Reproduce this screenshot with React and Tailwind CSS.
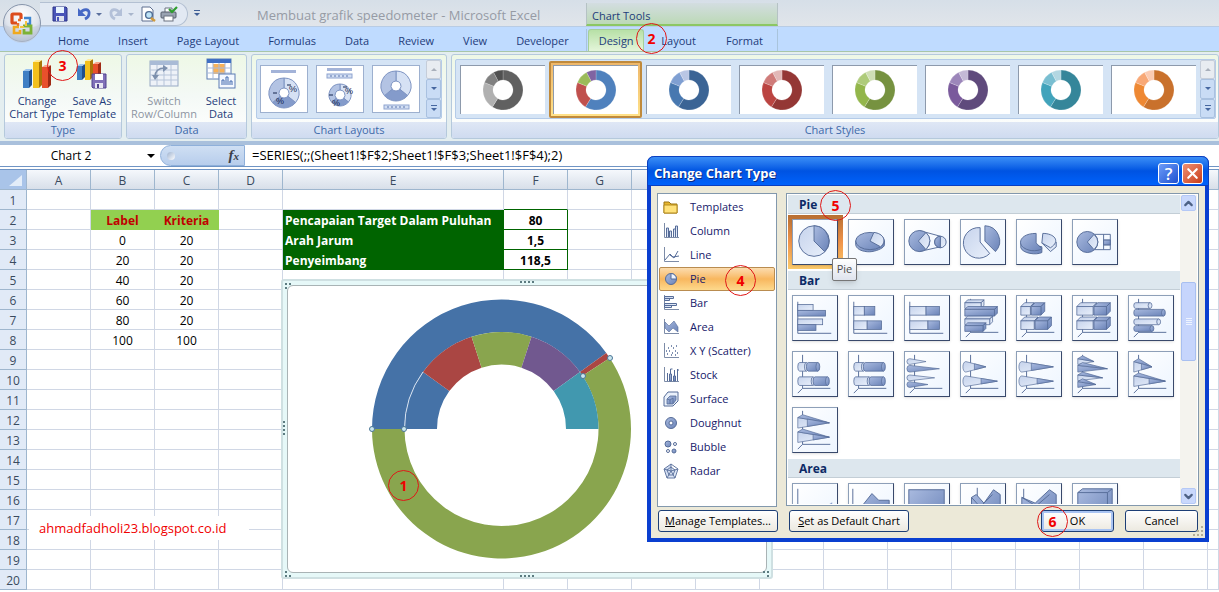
import { ChevronDown, ChevronUp, X } from "lucide-react";

const INK = "#566c98";
const LIGHT = "url(#pale)";
const DARK = "url(#steel)";

const point = (cx, cy, r, deg) => {
  const a = ((deg - 90) * Math.PI) / 180;
  return `${(cx + r * Math.cos(a)).toFixed(2)} ${(cy + r * Math.sin(a)).toFixed(2)}`;
};

// Ring slice between two angles, clockwise from 12 o'clock
function slice(cx, cy, outer, inner, from, to) {
  const large = to - from > 180 ? 1 : 0;
  return `M${point(cx, cy, outer, from)}A${outer} ${outer} 0 ${large} 1 ${point(cx, cy, outer, to)}L${point(cx, cy, inner, to)}A${inner} ${inner} 0 ${large} 0 ${point(cx, cy, inner, from)}Z`;
}

// Gradients shared by every chart icon
function SharedGradients() {
  return (
    <svg className="absolute size-0" aria-hidden="true">
      <defs>
        <linearGradient id="pale" x1="0" y1="0" x2="1" y2="1">
          <stop offset="0" stopColor="#c6d3ec" />
          <stop offset="1" stopColor="#e9f0fb" />
        </linearGradient>
        <linearGradient id="steel" x1="0" y1="0" x2="1" y2="1">
          <stop offset="0" stopColor="#a9badf" />
          <stop offset="1" stopColor="#6a83b8" />
        </linearGradient>
      </defs>
    </svg>
  );
}

/* ---------- ribbon drawings ---------- */

function OfficeLogo() {
  return (
    <svg viewBox="0 0 40 40" className="size-10">
      <defs>
        <radialGradient id="orb" cx="50%" cy="30%" r="75%">
          <stop offset="0" stopColor="#ffffff" />
          <stop offset="0.6" stopColor="#dfe4ec" />
          <stop offset="1" stopColor="#9fb0c8" />
        </radialGradient>
      </defs>
      <circle cx="20" cy="20" r="18.5" fill="url(#orb)" stroke="#8795ab" />
      <path d="M2 22a18 18 0 0 0 36 0q-18 7-36 0" fill="#c3ccda" opacity="0.5" />
      <g fill="none">
        <path d="M15 20h-4q-1 0-1-1v-7q0-1 1-1h7q1 0 1 1v4" stroke="#dc4c1c" strokeWidth="3.2" />
        <path d="M22 15h6v6h-4" stroke="#3f86cf" strokeWidth="2.4" />
        <path d="M16 20v3M19 17h-3" stroke="#e8702c" strokeWidth="2.4" />
        <path d="M17 24h-5v6h6v-3" stroke="#f0a91e" strokeWidth="2.6" />
        <path d="M21 23h8v7h-7v-4" stroke="#7cb236" strokeWidth="2.8" />
        <path d="M24 18v5M18 24h4" stroke="#f4c544" strokeWidth="2" />
      </g>
    </svg>
  );
}

function Floppy({ color = "#4a55b8" }) {
  return (
    <svg viewBox="0 0 16 16" className="size-4">
      <path d="M1 1h13l1 1v13H1z" fill={color} stroke="#2c3488" />
      <rect x="4" y="1" width="8" height="6" fill="#e8f4ff" />
      <rect x="4" y="10" width="8" height="5" fill="#dfe3ee" />
      <rect x="5" y="11" width="2" height="4" fill={color} />
    </svg>
  );
}

function UndoArrow({ color, flip }) {
  return (
    <svg viewBox="0 0 16 16" className={flip ? "size-4 -scale-x-100" : "size-4"}>
      <path d="M4 7c4-5 10-4 9 1 0 3-2 4-4 5" fill="none" stroke={color} strokeWidth="2.8" />
      <path d="M2 2v8h8z" fill={color} />
    </svg>
  );
}

function Preview() {
  return (
    <svg viewBox="0 0 16 16" className="size-4">
      <path d="M2 1h8l3 3v11H2z" fill="#fff" stroke="#5f6f8f" />
      <circle cx="9" cy="9" r="3.4" fill="#bfe4f7" stroke="#4f6b93" strokeWidth="1.4" />
      <path d="m11 12 4 3" stroke="#d09a3c" strokeWidth="2.4" />
    </svg>
  );
}

function Printer() {
  return (
    <svg viewBox="0 0 18 16" className="h-4 w-[18px]">
      <path d="M5 6V2h7v4" fill="#fff" stroke="#6b7280" />
      <rect x="1" y="6" width="15" height="6" rx="1" fill="#9aa3b2" stroke="#555d6b" />
      <rect x="4" y="10" width="9" height="5" fill="#fff" stroke="#6b7280" />
      <path d="m9 3 3 3 5-5" fill="none" stroke="#2e9e2e" strokeWidth="2.2" />
    </svg>
  );
}

function ColumnBlock({ x, y, h, w, front, side, top }) {
  return (
    <g>
      <rect x={x} y={y} width={w} height={h} fill={front} />
      <path d={`M${x + w} ${y}l3-2v${h - 1}l-3 3z`} fill={side} />
      <path d={`M${x} ${y}l3-2h${w}l-3 2z`} fill={top} />
    </g>
  );
}

function ChangeTypeIcon() {
  return (
    <svg viewBox="0 0 32 32" className="size-8">
      <ColumnBlock x={2} y={13} w={6} h={17} front="#3f7fc4" side="#1f4e8c" top="#9cc4ee" />
      <ColumnBlock x={12} y={4} w={6} h={26} front="#f3c01c" side="#a97508" top="#ffe99a" />
      <ColumnBlock x={21} y={9} w={6} h={21} front="#e8502c" side="#9f2a14" top="#f8a58c" />
    </svg>
  );
}

function SaveTemplateIcon() {
  return (
    <svg viewBox="0 0 32 32" className="size-8">
      <ColumnBlock x={1} y={8} w={5} h={14} front="#3f7fc4" side="#1f4e8c" top="#9cc4ee" />
      <ColumnBlock x={9} y={3} w={5} h={19} front="#f3c01c" side="#a97508" top="#ffe99a" />
      <ColumnBlock x={17} y={6} w={5} h={14} front="#e8502c" side="#9f2a14" top="#f8a58c" />
      <path d="M16 16h14v14H17l-1-1z" fill="#8070b8" stroke="#51428f" />
      <rect x="19" y="16" width="8" height="6" fill="#fff" />
      <rect x="19" y="25" width="8" height="5" fill="#e8e6f2" />
      <rect x="21" y="26" width="2" height="4" fill="#51428f" />
    </svg>
  );
}

function SwitchIcon() {
  return (
    <svg viewBox="0 0 32 32" className="size-8">
      <rect x="2" y="3" width="28" height="25" fill="#eef2f8" stroke="#97a9c4" />
      <rect x="2" y="3" width="28" height="4" fill="#a9bbd6" />
      <path d="M2 12h28M2 17h28M2 22h28M9 7v21M16 7v21M23 7v21" stroke="#b6c4d9" />
      <path d="M7 19c0-6 4-9 10-9" fill="none" stroke="#7d90ad" strokeWidth="1.6" />
      <path d="m4 17 3 5 4-5zM15 7l5 3-5 4z" fill="#7d90ad" />
    </svg>
  );
}

function SelectDataIcon() {
  return (
    <svg viewBox="0 0 32 32" className="size-8">
      <rect x="2" y="1" width="24" height="20" fill="#fff" stroke="#5c7db3" />
      <rect x="2" y="1" width="24" height="4" fill="#3f6fc4" />
      <rect x="8" y="6" width="12" height="10" fill="#f7b25a" />
      <path d="M2 10h24M2 15h24M8 5v16M14 5v16M20 5v16" stroke="#a9bbda" />
      <rect x="14" y="16" width="16" height="14" fill="#f4f8ff" stroke="#5c7db3" />
      <path d="M17 27v-5h2v5M21 27v-8h2v8M25 27v-4h2v4" fill="none" stroke="#4069ae" />
    </svg>
  );
}

function LayoutThumb({ variant }) {
  const cy = [27, 29, 20][variant];
  const r = [15, 11, 15][variant];
  const marks = variant < 2;
  return (
    <svg viewBox="0 0 46 46" className="size-full">
      {variant < 2 && <rect x="10" y={variant ? 2 : 4} width="25" height="3" fill="#a3b3d8" />}
      {variant === 1 && <rect x="10" y="8" width="25" height="4" fill="#d3dff3" stroke="#8ea3cf" />}
      {variant === 1 && <path d="M13 10h19" stroke="#5a74ad" strokeDasharray="2 2" />}
      <path d={slice(23, cy, r, 5, 0, 130)} fill="#d6e1f4" stroke="#7d93c2" />
      <path d={slice(23, cy, r, 5, 130, 230)} fill="#849bcb" stroke="#7d93c2" />
      <path d={slice(23, cy, r, 5, 230, 360)} fill="#b3c3e3" stroke="#7d93c2" />
      {marks && (
        <g className="font-['Liberation_Sans'] text-[9px]" fill="#14244c">
          <text x="28" y={cy - 1}>%</text>
          <text x="15" y={cy + 11}>%</text>
          <path d={`M12 ${cy}h4M26 ${cy - 8}h4`} stroke="#14244c" />
        </g>
      )}
      {variant === 2 && <rect x="11" y="39" width="25" height="4" fill="#d3dff3" stroke="#8ea3cf" />}
      {variant === 2 && <path d="M14 41h19" stroke="#5a74ad" strokeDasharray="2 2" />}
    </svg>
  );
}

const styles = [
  ["#606060", "#b0b0b0", "#808080", "#505050"],
  ["#4f81bd", "#c0504d", "#9bbb59", "#8064a2"],
  ["#3b6495", "#4878b0", "#7f9fd2", "#b9c6e4"],
  ["#943735", "#bb4441", "#cf7b79", "#e2b8b7"],
  ["#769240", "#93b64b", "#aecb7a", "#cfdfb5"],
  ["#5f4a7c", "#7a5a9c", "#9c86ba", "#c4b9d6"],
  ["#35869a", "#41a3bb", "#79bed1", "#b3d7e2"],
  ["#c9712c", "#ee8833", "#f8a876", "#fbcbb2"],
];

function Ring({ colors }) {
  const stops = [0, 212, 292, 332, 360];
  return (
    <svg viewBox="0 0 40 40" className="size-10">
      {colors.map((c, i) => (
        <path key={i} d={slice(20, 20, 20, 10, stops[i], stops[i + 1])} fill={c} stroke="#fff" strokeOpacity="0.4" strokeWidth="0.5" />
      ))}
    </svg>
  );
}

function Triangle({ up }) {
  return (
    <svg viewBox="0 0 8 4" className="h-1 w-2">
      <path d={up ? "M0 4h8L4 0z" : "M0 0h8L4 4z"} fill="currentColor" />
    </svg>
  );
}

function SmallTriangle() {
  return (
    <svg viewBox="0 0 6 3" className="h-[3px] w-[6px]">
      <path d="M0 0h6L3 3z" fill="currentColor" />
    </svg>
  );
}

function GalleryScroll({ name }) {
  const base = "flex flex-1 flex-col items-center justify-center gap-[2px] rounded-[2px] border";
  return (
    <div className="flex w-[15px] shrink-0 flex-col">
      <button aria-label={`Previous ${name}`} className={`${base} border-[#c5cdd9] bg-[#e8ecf1] text-[#a9b0bb]`}><svg viewBox="0 0 6 3" className="h-[3px] w-[6px]"><path d="M0 3h6L3 0z" fill="currentColor" /></svg></button>
      <button aria-label={`Next ${name}`} className={`${base} border-[#a9c1e0] bg-[#c9dcf5] text-[#4667a0]`}><SmallTriangle /></button>
      <button aria-label={`More ${name}`} className={`${base} border-[#a9c1e0] bg-[#c9dcf5] text-[#4667a0]`}>
        <span className="h-px w-[6px] bg-current" />
        <SmallTriangle />
      </button>
    </div>
  );
}

function Group({ title, className, children }) {
  return (
    <section className={`flex h-[85px] flex-col overflow-hidden rounded-[3px] border border-[#b5c9dc] bg-gradient-to-b from-[#eef8e6] via-[#f4f9f6] to-white ${className}`}>
      <div className="flex flex-1">{children}</div>
      <h2 className="h-4 bg-gradient-to-b from-[#dfe7f5] to-[#cfdbf0] text-center leading-4 text-[#3e6aaa]">{title}</h2>
    </section>
  );
}

function BigButton({ icon, lines, disabled, className }) {
  return (
    <button disabled={disabled} className={`flex flex-col items-center pt-[3px] leading-[13px] ${disabled ? "text-[#8d95a2]" : "text-[#1e3c7b]"} ${className}`}>
      {icon}
      <span className="mt-1 whitespace-nowrap">{lines[0]}<br />{lines[1]}</span>
    </button>
  );
}

const tabs = ["Home", "Insert", "Page Layout", "Formulas", "Data", "Review", "View", "Developer"];

function TitleBar() {
  return (
    <div className="flex h-[27px] border-b border-[#b9cce4] bg-gradient-to-b from-[#d6dfe8] to-[#e1e5ea]">
      <div className="flex w-[586px] shrink-0 items-center">
        <div className="mt-[2px] ml-10 flex h-6 w-[148px] items-center gap-1 rounded-r-full border border-l-0 border-[#b3c0d2] bg-[#e2e9f3] pl-3">
          <button aria-label="Save"><Floppy /></button>
          <button aria-label="Undo" className="ml-1"><UndoArrow color="#4668c5" /></button>
          <span className="text-[#5a6f9c]"><SmallTriangle /></span>
          <button aria-label="Redo" className="ml-[2px]"><UndoArrow color="#b3c0d8" flip /></button>
          <span className="text-[#a9b6cc]"><SmallTriangle /></span>
          <button aria-label="Print Preview" className="ml-[2px]"><Preview /></button>
          <button aria-label="Quick Print"><Printer /></button>
        </div>
        <button aria-label="Customize Quick Access Toolbar" className="ml-[6px] flex flex-col items-center gap-[2px] text-[#3f5f97]">
          <span className="h-px w-[6px] bg-current" />
          <SmallTriangle />
        </button>
        <h1 className="ml-[57px] pt-[6px] text-[13px] whitespace-nowrap text-[#969ba5]">Membuat grafik speedometer - Microsoft Excel</h1>
      </div>
      <div className="mt-[3px] w-48 shrink-0 border-x border-[#b5c2c4] border-b-2 border-b-[#8cc763] bg-gradient-to-b from-[#d3dde1] to-[#bcd9b6] pl-[5px] leading-[26px] text-[#1e3c7b]">Chart Tools</div>
    </div>
  );
}

function TabRow() {
  return (
    <div className="flex h-6 items-end bg-[#bfdbff] leading-[22px] text-[#1e3c7b]">
      <nav className="flex w-[586px] shrink-0 gap-px pl-11">
        {tabs.map((t) => <button key={t} className="h-[22px] px-[14px] pt-px whitespace-nowrap">{t}</button>)}
      </nav>
      <nav className="flex w-48 shrink-0 border-x border-[#a9c4dc]">
        <button className="ml-px h-[22px] w-[58px] rounded-t-[3px] border border-b-0 border-[#a5cf99] bg-gradient-to-b from-[#b7e0a6] to-[#e4f5da]">Design</button>
        <button className="h-[22px] pt-px pr-4 pl-[17px]">Layout</button>
        <button className="h-[22px] px-[14px] pt-px">Format</button>
      </nav>
    </div>
  );
}

function Ribbon() {
  return (
    <div className="flex gap-1 border-t border-[#a8c6a8] bg-[#e4eef0] pt-[2px] pb-[2px] pl-1">
      <Group title="Type" className="w-[118px] shrink-0">
        <BigButton className="w-16" icon={<ChangeTypeIcon />} lines={["Change", "Chart Type"]} />
        <BigButton className="w-[46px]" icon={<SaveTemplateIcon />} lines={["Save As", "Template"]} />
      </Group>
      <Group title="Data" className="w-[121px] shrink-0">
        <BigButton disabled className="w-[74px]" icon={<SwitchIcon />} lines={["Switch", "Row/Column"]} />
        <BigButton className="w-10" icon={<SelectDataIcon />} lines={["Select", "Data"]} />
      </Group>
      <Group title="Chart Layouts" className="w-[196px] shrink-0">
        <div className="m-1 mb-0 flex h-[60px] flex-1 rounded-[2px] border border-[#b4cbe8] bg-[#d5e4f5]">
          <div className="flex flex-1 items-center gap-2 pl-[3px]">
            {[0, 1, 2].map((v) => (
              <button key={v} aria-label={`Layout ${v + 1}`} className="size-12 shrink-0 border border-[#9db0cf] bg-white"><LayoutThumb variant={v} /></button>
            ))}
          </div>
          <GalleryScroll name="layouts" />
        </div>
      </Group>
      <Group title="Chart Styles" className="min-w-0 flex-1">
        <div className="my-1 mr-[2px] mb-0 ml-[3px] flex h-[60px] min-w-0 flex-1 rounded-[2px] border border-[#b4cbe8] bg-[#d5e4f5]">
          <div className="flex min-w-0 flex-1 items-center overflow-hidden">
            {styles.map((colors, i) => (
              <button key={i} aria-label={`Style ${i + 1}`} className={i === 1 ? "h-[57px] w-[93px] shrink-0 rounded-[2px] border-2 border-[#c08a3c] bg-gradient-to-b from-[#eeb76a] to-[#ffe28a] p-[2px]" : "h-[57px] w-[93px] shrink-0 p-1"}>
                <span className="flex size-full items-center justify-center border-t border-l border-[#8d9aac] bg-white"><Ring colors={colors} /></span>
              </button>
            ))}
          </div>
          <GalleryScroll name="styles" />
        </div>
      </Group>
    </div>
  );
}

function FormulaBar() {
  return (
    <div className="flex h-[26px] border-t-4 border-b border-t-[#a9c0dc] border-b-[#6f94c4] bg-white font-['Open_Sans',sans-serif]">
      <input aria-label="Name Box" defaultValue="Chart 2" className="w-[142px] shrink-0 text-center text-[12px] outline-none" />
      <button aria-label="Name Box list" className="flex w-[18px] shrink-0 items-center justify-center"><Triangle /></button>
      <div className="flex w-[85px] shrink-0 items-center justify-between rounded-l-full border border-[#8fb0da] bg-gradient-to-b from-[#cfdff3] to-[#b7cdec] pr-[5px] pl-[6px]">
        <span className="size-2 rounded-full bg-gradient-to-br from-[#9fb3d0] to-white" />
        <button aria-label="Insert Function" className="font-['Liberation_Serif',serif] text-[15px] leading-none font-bold text-[#3b3f4a] italic">f<span className="text-[11px]">x</span></button>
      </div>
      <input aria-label="Formula" defaultValue="=SERIES(;;(Sheet1!$F$2;Sheet1!$F$3;Sheet1!$F$4);2)" className="min-w-0 flex-1 pl-[7px] text-[13px] outline-none" />
    </div>
  );
}

/* ---------- worksheet ---------- */

const columns = ["A", "B", "C", "D", "E", "F", "G"];
const spare = [...Array(10).keys()];
const rows = Array.from({ length: 20 }, (_, i) => i + 1);
const cells = {
  B2: "Label", C2: "Kriteria",
  B3: "0", C3: "20", B4: "20", C4: "20", B5: "40", C5: "20",
  B6: "60", C6: "20", B7: "80", C7: "20", B8: "100", C8: "100",
  E2: "Pencapaian Target Dalam Puluhan", F2: "80",
  E3: "Arah Jarum", F3: "1,5",
  E4: "Penyeimbang", F4: "118,5",
};

function cellStyle(c, r) {
  if (r === 2 && (c === "B" || c === "C")) return "border-[#92d050] bg-[#92d050] text-center font-bold text-[#c00000]";
  if (r >= 2 && r <= 4 && c === "E") return "border-[#006400] bg-[#006400] pl-[2px] font-bold text-white";
  if (r >= 2 && r <= 4 && c === "F") return "border-[#006400] text-center font-bold";
  if (r === 1 && c === "F") return "border-r-[#d0d7e5] border-b-[#006400]";
  return "border-[#d0d7e5] text-center";
}

function Sheet() {
  const head = "border-r border-b border-[#9eb6ce] bg-gradient-to-b from-[#f5f8fc] to-[#d8dfe9] px-0 pt-[2px] pb-0 font-normal";
  return (
    <table className="w-full table-fixed border-separate border-spacing-0 border-t border-[#6f94c4] font-['Open_Sans',sans-serif] text-[12px] leading-[17px]">
      <colgroup>
        <col className="w-[27px]" />
        {columns.map((c) => <col key={c} className={c === "E" ? "w-[221px]" : "w-16"} />)}
        {spare.map((n) => <col key={n} className={n < 9 ? "w-16" : ""} />)}
      </colgroup>
      <thead>
        <tr className="h-5 text-[#3a4a5e]">
          <th className="border-r border-b border-[#9eb6ce] bg-[#a9c4e9] p-0 align-bottom">
            <svg viewBox="0 0 26 19" className="h-[19px] w-[26px]"><path d="M22 5v11H9z" fill="#e3edf9" /></svg>
          </th>
          {columns.map((c) => <th key={c} className={head}>{c}</th>)}
          {spare.map((n) => <th key={n} className={head} />)}
        </tr>
      </thead>
      <tbody>
        {rows.map((r) => (
          <tr key={r} className="h-5">
            <th className="border-r border-b border-[#9eb6ce] bg-[#e1eaf7] px-0 pt-[2px] pb-0 font-normal text-[#3a4a5e]">{r}</th>
            {columns.map((c) => (
              <td key={c} className={`border-r border-b pt-[2px] pb-0 whitespace-nowrap ${cellStyle(c, r)}`}>{cells[c + r]}</td>
            ))}
            {spare.map((n) => <td key={n} className="border-r border-b border-[#d0d7e5] p-0" />)}
          </tr>
        ))}
      </tbody>
    </table>
  );
}

const inner = ["#4572a7", "#aa4643", "#89a54e", "#71588f", "#4198af"];
const handles = [[84, 143], [116, 143], [322, 72], [295, 90]];

function ChartObject() {
  return (
    <figure className="absolute top-[279px] left-[281px] h-[300px] w-[492px] rounded-[3px] border-2 border-[#cfe0e2] bg-[#e6f8f8] p-1">
      <svg viewBox="0 0 478 286" className="size-full rounded-[6px] border border-[#a9b3b5] bg-white">
        <path d={slice(213.5, 143, 129.5, 97, -90, 54)} fill="#4572a7" />
        <path d={slice(213.5, 143, 129.5, 97, 54, 56.7)} fill="#aa4643" />
        <path d={slice(213.5, 143, 129.5, 97, 56.7, 270)} fill="#89a54e" />
        {inner.map((c, i) => <path key={c} d={slice(213.5, 143, 97, 64.5, -90 + i * 36, -54 + i * 36)} fill={c} />)}
        <path d="M116.5 143A97 97 0 0 1 135 86" fill="none" stroke="#d7e2f0" />
        {handles.map(([x, y]) => <circle key={x} cx={x} cy={y} r="2.5" fill="#c9e6ee" stroke="#4b7596" />)}
      </svg>
      <svg viewBox="0 0 488 296" className="absolute inset-0 size-full" fill="none" stroke="#5c7b80" strokeWidth="2">
        <path d="M237 1h16M237 295h16M1 140v16M2 3h6M2 7h3M2 291h3M2 295h6M480 291h6M484 295h3" strokeDasharray="2 2" />
      </svg>
    </figure>
  );
}

/* ---------- dialog icons ---------- */

const fillOf = (dark) => (dark ? DARK : LIGHT);

function Axis({ deep }) {
  return <path d={deep ? "M10 3v35h29M10 38l-5 5" : "M5 6v33h35"} stroke={INK} fill="none" />;
}

function FlatBar({ x = 5, y, w, h, dark }) {
  return <rect x={x} y={y} width={w} height={h} fill={fillOf(dark)} stroke={INK} strokeWidth="0.8" />;
}

function Box({ x = 4, y, w, h, dark, d = 4 }) {
  return (
    <g fill={fillOf(dark)} stroke={INK} strokeWidth="0.8" strokeLinejoin="round">
      <path d={`M${x} ${y}l${d}-${d}h${w}l-${d} ${d}zM${x + w} ${y}l${d}-${d}v${h}l-${d} ${d}z`} />
      <rect x={x} y={y} width={w} height={h} />
    </g>
  );
}

function Tube({ x = 5, y, w, h, dark }) {
  const r = h / 2;
  return (
    <g fill={fillOf(dark)} stroke={INK} strokeWidth="0.8">
      <path d={`M${x + 2} ${y}h${w - 2}v${h}h-${w - 2}a2 ${r} 0 0 1 0-${h}z`} />
      <ellipse cx={x + w} cy={y + r} rx="2" ry={r} />
    </g>
  );
}

function Spike({ x = 5, y, w, h, dark, split, sharp }) {
  const r = h / 2;
  const t = split ? split / w : 0;
  const base = sharp ? `L${x} ${y + h}` : `A3 ${r} 0 0 0 ${x} ${y + h}`;
  return (
    <g stroke={INK} strokeWidth="0.7" strokeLinejoin="round">
      <path d={`M${x} ${y}${base}L${x + w} ${y + r}z`} fill={fillOf(dark)} />
      {sharp && <path d={`M${x} ${y}l5 -3 L${x + w} ${y + r}z`} fill={DARK} />}
      {split && <path d={`M${x + split} ${y + r * t}v${h - h * t}L${x + w} ${y + r}z`} fill={DARK} />}
    </g>
  );
}

const cluster = (Part, props) => (
  <>
    <Part y={7} w={17} h={6} {...props} />
    <Part y={14} w={31} h={7} dark {...props} />
    <Part y={24} w={26} h={6} {...props} />
    <Part y={31} w={19} h={6} dark {...props} />
  </>
);

const stack = (Part, w1, s1, w2, s2) => (
  <>
    <Part y={11} w={s1} h={9} />
    <Part x={5 + s1} y={11} w={w1 - s1} h={9} dark />
    <Part y={26} w={s2} h={9} />
    <Part x={5 + s2} y={26} w={w2 - s2} h={9} dark />
  </>
);

const spikes = (w1, s1, w2, s2, sharp) => (
  <>
    <Spike y={10} w={w1} h={11} split={s1} sharp={sharp} />
    <Spike y={25} w={w2} h={11} split={s2} sharp={sharp} />
  </>
);

const flat = (body) => <><Axis />{body}</>;
const deep = (body) => <><Axis deep />{body}</>;

const bars = [
  ["Clustered Bar", flat(<><FlatBar y={9} w={16} h={6} /><FlatBar y={15} w={29} h={6} dark /><FlatBar y={24} w={26} h={6} /><FlatBar y={30} w={19} h={6} dark /></>)],
  ["Stacked Bar", flat(stack(FlatBar, 22, 11, 29, 14))],
  ["100% Stacked Bar", flat(stack(FlatBar, 31, 17, 31, 19))],
  ["Clustered Bar in 3-D", deep(cluster(Box, { d: 3 }))],
  ["Stacked Bar in 3-D", deep(stack(Box, 20, 10, 27, 14))],
  ["100% Stacked Bar in 3-D", deep(stack(Box, 30, 17, 30, 17))],
  ["Clustered Horizontal Cylinder", deep(cluster(Tube))],
  ["Stacked Horizontal Cylinder", deep(stack(Tube, 21, 9, 31, 16))],
  ["100% Stacked Horizontal Cylinder", deep(stack(Tube, 31, 10, 31, 16))],
  ["Clustered Horizontal Cone", deep(cluster(Spike))],
  ["Stacked Horizontal Cone", deep(spikes(21, 9, 33, 16))],
  ["100% Stacked Horizontal Cone", deep(spikes(33, 10, 33, 16))],
  ["Clustered Horizontal Pyramid", deep(cluster(Spike, { sharp: true }))],
  ["Stacked Horizontal Pyramid", deep(spikes(19, 8, 33, 16, true))],
  ["100% Stacked Horizontal Pyramid", deep(spikes(33, 10, 33, 16, true))],
];

const pies = [
  ["Pie", <g stroke={INK} key="p"><circle cx="22" cy="22" r="16" fill={LIGHT} /><path d="M22 22V6a16 16 0 0 1 11 27z" fill={DARK} /></g>],
  ["Pie in 3-D", <g stroke={INK} key="p"><path d="M7 22v4c1 6 11 8 17 7s13-4 13-7v-4z" fill={DARK} /><ellipse cx="22" cy="22" rx="15" ry="9" fill={DARK} /><path d="M22 22l4-9c10 1 14 9 7 15z" fill={LIGHT} /></g>],
  ["Pie of Pie", <g stroke={INK} key="p"><path d="M15 11l22 6M15 33l22-5" /><circle cx="15" cy="22" r="11" fill={DARK} /><path d="M14 22l8-9q8 8 0 18z" fill={LIGHT} /><circle cx="37" cy="23" r="6" fill={LIGHT} /><path d="M37 17v12a6 6 0 0 1 0-12z" fill={DARK} /></g>],
  ["Exploded Pie", <g stroke={INK} key="p"><path d="M20 23V8a16 16 0 1 0 10 27z" fill={LIGHT} /><path d="M25 22V6a16 16 0 0 1 11 27z" fill={DARK} /></g>],
  ["Exploded Pie in 3-D", <g stroke={INK} key="p"><path d="M4 23v6c2 6 16 8 22 5v-6z" fill={DARK} /><path d="M20 24V14C4 14 0 24 7 29s17 3 19 1z" fill={DARK} /><path d="M26 24l9 9 6-5v-5z" fill={LIGHT} /><path d="M26 24l1-10c12 0 19 8 8 15z" fill={LIGHT} /></g>],
  ["Bar of Pie", <g stroke={INK} key="p" fill="none"><path d="M17 15h22v16H17M32 15v16M32 21h7M32 26h7" /><circle cx="15" cy="23" r="11" fill={DARK} /><path d="M15 23l7-8q8 8 0 16z" fill={LIGHT} /><path d="M32 21h7v5h-7z" fill={DARK} /></g>],
];

const areas = [
  ["Area", <g key="a"><path d="M5 5v39" stroke={INK} /><path d="M41 19v25h-6V23z" fill={DARK} /></g>],
  ["Stacked Area", <g stroke={INK} key="a"><path d="M4 5v39" /><path d="M5 45V28l7-3 12-15 7 7h11v28z" fill={DARK} /></g>],
  ["100% Stacked Area", <rect key="a" x="4" y="6" width="37" height="40" fill={DARK} stroke={INK} />],
  ["Area in 3-D", <g stroke={INK} key="a"><path d="M17 4v20" /><path d="M11 46V14l5-3 8 9 10-14 7 5v35z" fill={DARK} /><path d="M11 14l9 10 13-13" fill="none" /></g>],
  ["Stacked Area in 3-D", <g stroke={INK} key="a"><path d="M7 5v38" /><path d="M5 46V14l14 6L34 6l7 5v35z" fill={DARK} /><path d="M5 14l15 9 14-12" fill="none" /></g>],
  ["100% Stacked Area in 3-D", <g stroke={INK} key="a"><path d="M5 46V9l5-4h31v41z" fill={DARK} /><path d="M5 9h31v37M36 9l5-4" fill="none" /></g>],
];

const axes = <path d="M1.5 0v14.5H16" fill="none" stroke="#7d8ca8" />;

const smallIcons = {
  Templates: <><path d="M1 3h5l2 2h6v9H1z" fill="#e7b62e" stroke="#9b7412" /><path d="M1 6h13v8H1z" fill="#ffe27a" stroke="#b38a1c" /></>,
  Column: <>{axes}<path d="M3.5 14V5h2v9M6.5 14V8h2v6M10.5 14V6h2v8M12.5 14V3h2v11" fill={LIGHT} /></>,
  Line: <>{axes}<path d="M2 13l5-6 3 3 6-1M7 8l4 3 4-7" fill="none" /></>,
  Pie: <><circle cx="8" cy="8" r="5.5" fill={DARK} /><path d="M8 8V2.5A5.5 5.5 0 0 1 13.500 8z" fill="#eef4ff" /></>,
  Bar: <>{axes}<path d="M1.500 1.500h9v2h-9zM1.500 3.500h5v2h-5zM1.500 8.500h12v2h-12zM1.500 10.500h7v2h-7z" fill={LIGHT} /></>,
  Area: <>{axes}<path d="M2 3l4 4 5-5 4 6v5l-5-4-4 4-4-4z" fill={DARK} strokeWidth="0.6" /></>,
  "X Y (Scatter)": <>{axes}<path d="M4 11h1M6 8h1M5 5h1M9 10h1M10 5h1M12 8h1M13 3h1M8 12h1M12 12h1M3 8h1M8 3h1M14 10h1" fill="none" strokeWidth="1.4" /></>,
  Stock: <>{axes}<path d="M4.500 6v8M7.500 2v5M11.500 3v6M14.500 2v12M7.500 2h2M14.500 3h2" fill="none" /><path d="M6.500 7h2v7h-2zM10.500 9h2v5h-2z" fill={DARK} /></>,
  Surface: <><path d="M1 6l4-5h10v9l-5 5H1z" fill="#eaf1fb" /><path d="M4 13V8l3-3h6v4l-3 4zM7 13V9l3-2v5M4 8l3 1" fill={DARK} strokeWidth="0.8" /></>,
  Doughnut: <><circle cx="8" cy="8" r="5.5" fill={DARK} /><circle cx="8" cy="8" r="2" fill="#fff" /></>,
  Bubble: <><circle cx="5" cy="5" r="3" fill={DARK} /><circle cx="12" cy="5" r="1.500" fill="#fff" /><circle cx="5" cy="12" r="1.500" fill="#fff" /><circle cx="11" cy="12" r="2" fill={DARK} /></>,
  Radar: <path d="M8 1l7 5-3 9H4L1 6zM8 4l4 3-2 5H6L4 7zM8 1v7l7-2M8 8l4 7M8 8l-4 7M8 8L1 6" fill={LIGHT} strokeWidth="0.900" />,
};

function TypeGroup({ title, items, selected }) {
  return (
    <section>
      <h3 className="h-[19px] border-b border-[#c3ced6] bg-[#dde7ee] pl-[11px] text-[12px] leading-5 font-bold text-[#0c2a66]">{title}</h3>
      <div className="grid grid-cols-[repeat(7,46px)] gap-[10px] pt-[5px] pb-[6px] pl-1">
        {items.map(([name, art]) => {
          const thumb = (
            <button key={name} aria-label={name} className="size-[46px] border border-[#8d9fb8] border-r-[#39496b] border-b-[#39496b] bg-gradient-to-br from-white to-[#edf5ff] shadow">
              <svg viewBox="0 0 46 46" className="size-full" fill="none">{art}</svg>
            </button>
          );
          if (name !== selected) return thumb;
          return <span key={name} className="-m-1 flex w-[55px] bg-gradient-to-b from-[#b86f33] via-[#f0944a] to-[#fbcb6c] p-1">{thumb}</span>;
        })}
      </div>
    </section>
  );
}

function DialogButton({ children, className, focus }) {
  return (
    <button className={`h-[22px] rounded-[3px] border border-[#1d3f76] bg-gradient-to-b from-white to-[#ece9e0] whitespace-nowrap text-black ${focus ? "shadow-[inset_0_0_0_2px_#a9c4f2]" : ""} ${className}`}>{children}</button>
  );
}

function ChartTypeDialog() {
  return (
    <div role="dialog" aria-labelledby="dialog-title" className="absolute top-[156px] left-[647px] flex w-[562px] flex-col rounded-t-[7px] border-r-4 border-b-4 border-l-4 border-[#0a3fd0] bg-[#ece9d8]">
      <div className="-mx-1 flex h-[30px] items-center gap-[3px] rounded-t-[7px] border border-[#0a3fc0] bg-gradient-to-b from-[#3a8ef6] via-[#0053e2] to-[#0062fb] pt-1 pr-[5px] pl-[6px]">
        <h2 id="dialog-title" className="flex-1 pt-px text-[13px] font-bold text-white [text-shadow:1px_1px_#0a2a80]">Change Chart Type</h2>
        <button aria-label="Help" className="size-[21px] rounded-[3px] border border-white bg-gradient-to-br from-[#6d9cf8] to-[#1f4fd0] text-[17px] leading-none font-semibold text-white">?</button>
        <button aria-label="Close" className="flex size-[21px] items-center justify-center rounded-[3px] border border-white bg-gradient-to-br from-[#ef8f72] to-[#c73a12] text-white"><X size={17} strokeWidth={3} /></button>
      </div>
      <div className="flex gap-[9px] px-[6px] pt-[7px]">
        <ul className="h-[314px] w-[120px] border border-[#8298ad] bg-white px-px pt-px">
          {Object.entries(smallIcons).map(([name, art]) => (
            <li key={name}>
              <button className={`flex h-6 w-full items-center gap-[11px] rounded-[2px] pl-1 text-[#16206a] ${name === "Pie" ? "border border-[#b98c50] bg-gradient-to-b from-[#fbdcae] via-[#f8b75e] to-[#fdd98c] pl-[3px]" : ""}`}>
                <svg viewBox="0 0 16 16" className="size-4" stroke={INK}>{art}</svg>
                {name}
              </button>
            </li>
          ))}
        </ul>
        <div className="flex h-[313px] min-w-0 flex-1 border border-[#8298ad] bg-white p-px">
          <div className="min-w-0 flex-1 overflow-hidden">
            <TypeGroup title="Pie" items={pies} selected="Pie" />
            <TypeGroup title="Bar" items={bars} />
            <TypeGroup title="Area" items={areas} />
          </div>
          <div className="flex w-[17px] flex-col bg-[#f4f3ee] px-px">
            <button aria-label="Scroll up" className="flex h-4 items-center justify-center rounded-[2px] border border-[#b4c8f6] bg-[#c9d8fc] text-[#4d6185]"><ChevronUp size={13} strokeWidth={4} /></button>
            <div className="mt-[71px] flex h-[79px] items-center justify-center rounded-[2px] border border-[#a8bff0] bg-[#c6d5fc]">
              <svg viewBox="0 0 6 8" className="h-2 w-[6px]"><path d="M0 .5h6M0 2.500h6M0 4.500h6M0 6.500h6" stroke="#eef4ff" /></svg>
            </div>
            <button aria-label="Scroll down" className="mt-auto flex h-4 items-center justify-center rounded-[2px] border border-[#b4c8f6] bg-[#c9d8fc] text-[#4d6185]"><ChevronDown size={13} strokeWidth={4} /></button>
          </div>
        </div>
      </div>
      <div className="flex px-[7px] pt-[3px] pb-[6px]">
        <DialogButton className="w-[120px]"><u>M</u>anage Templates...</DialogButton>
        <DialogButton className="ml-[11px] w-[120px]"><u>S</u>et as Default Chart</DialogButton>
        <DialogButton focus className="ml-auto w-[73px]">OK</DialogButton>
        <DialogButton className="ml-[11px] w-[73px]">Cancel</DialogButton>
      </div>
      <svg viewBox="0 0 12 12" className="absolute right-0 bottom-0 size-3" fill="#b3ae98">
        <path d="M8 0h2v2H8zM8 4h2v2H8zM4 4h2v2H4zM8 8h2v2H8zM4 8h2v2H4zM0 8h2v2H0z" />
      </svg>
      <div role="tooltip" className="absolute top-[102px] left-[181px] flex h-[23px] w-[25px] items-center justify-center rounded-[2px] border border-[#767676] bg-gradient-to-b from-white to-[#dfe4ee] text-[#4c4c4c] shadow-md">Pie</div>
    </div>
  );
}

function Step({ n, className }) {
  return (
    <span className={`absolute flex size-[31px] items-center justify-center rounded-full border border-[#e01818] text-[14px] font-bold text-[#f00000] ${className}`}>{n}</span>
  );
}

export default function App() {
  return (
    <div className="relative min-h-screen overflow-hidden bg-white font-['Open_Sans',sans-serif] text-[11px] text-black">
      <SharedGradients />
      <header>
        <TitleBar />
        <TabRow />
        <Ribbon />
        <button aria-label="Office Button" className="absolute top-[3px] left-[2px]"><OfficeLogo /></button>
        <FormulaBar />
      </header>
      <main className="pt-[2px]">
        <Sheet />
        <ChartObject />
        <p className="absolute top-[516px] left-[29px] w-[220px] bg-white pl-[10px] text-[13px] leading-6 text-[#f00000]">ahmadfadholi23.blogspot.co.id</p>
      </main>
      <ChartTypeDialog />
      <Step n={1} className="top-[470px] left-[388px]" />
      <Step n={2} className="top-[23px] left-[636px]" />
      <Step n={3} className="top-[50px] left-[47px]" />
      <Step n={4} className="top-[265px] left-[725px]" />
      <Step n={5} className="top-[190px] left-[820px]" />
      <Step n={6} className="top-[506px] left-[1037px]" />
    </div>
  );
}
